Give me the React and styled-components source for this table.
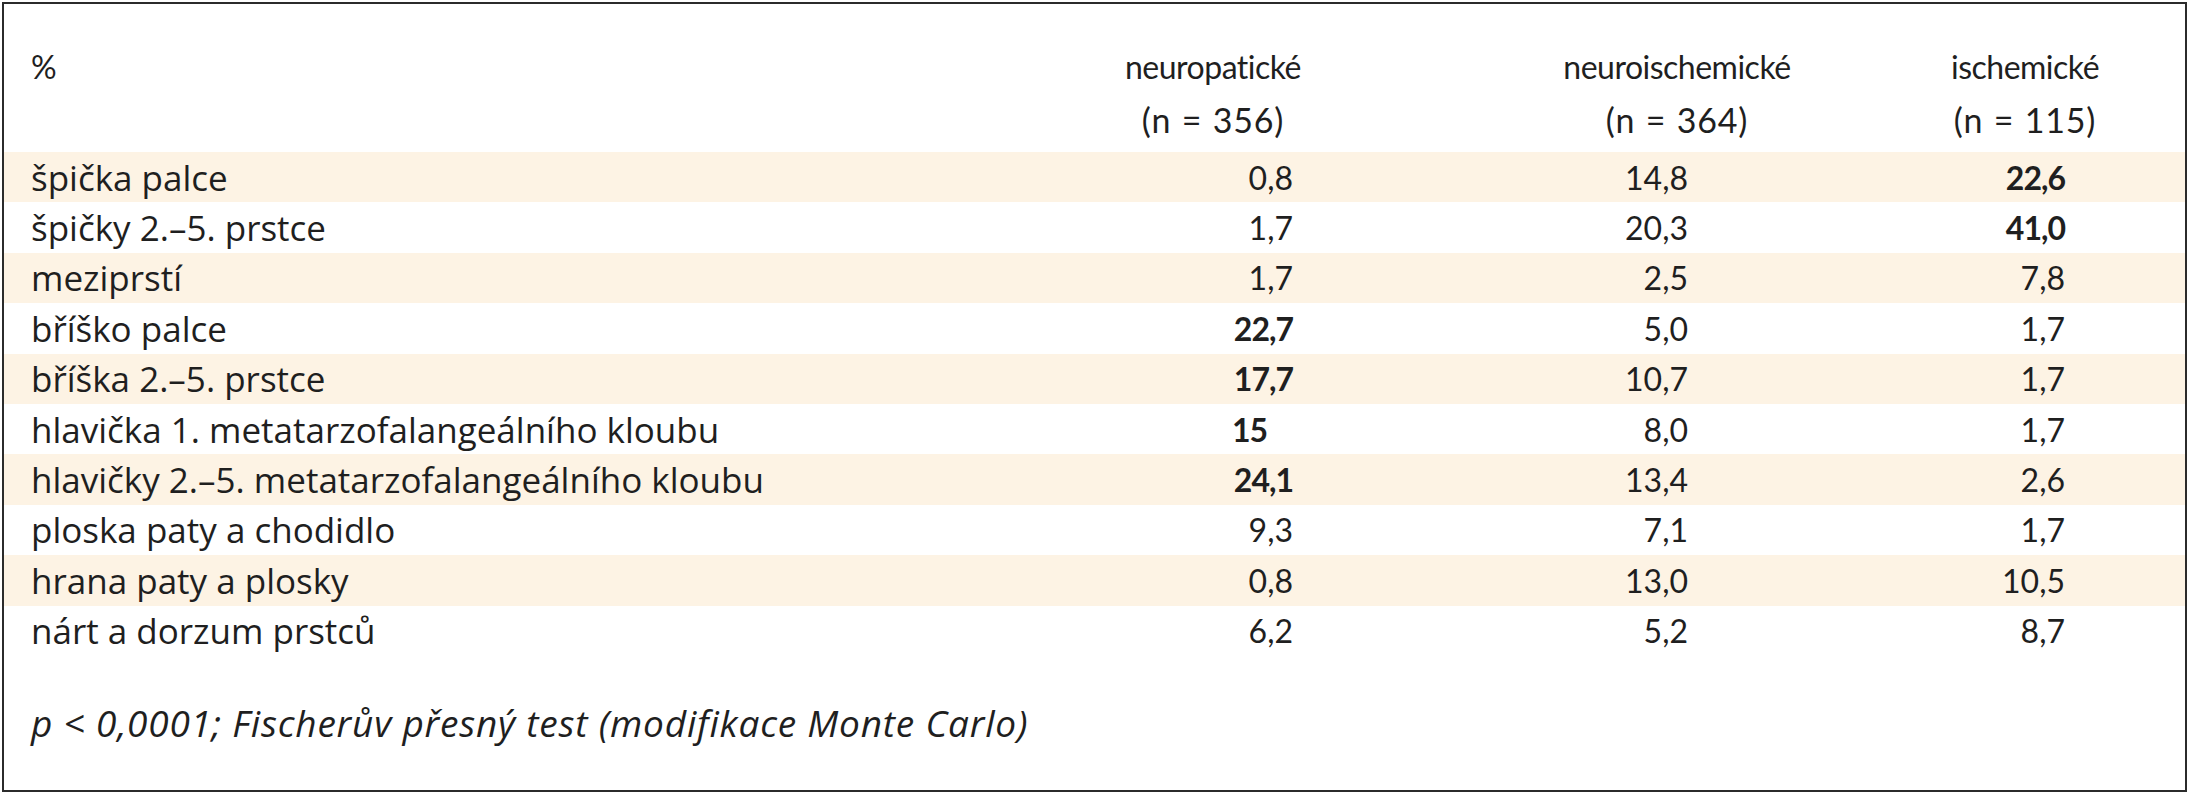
import React from "react";
import styled, { createGlobalStyle } from "styled-components";

const GlobalStyle = createGlobalStyle`
  html, body { margin: 0; padding: 0; background: #ffffff; }
  body { font-family: "Open Sans", Lato, sans-serif; color: #1f1f1f; }
`;

const Frame = styled.div`
  box-sizing: border-box;
  width: 2185px;
  height: 790px;
  margin: 2px 0 0 2px;
  border: 2px solid #2b2b2b;
  display: flex;
  flex-direction: column;
`;

const COLS = "1fr 462px 466px 230px";

const HeaderRow = styled.div`
  display: grid;
  grid-template-columns: ${COLS};
  padding: 36px 45px 0 0;
  height: 148px;
  box-sizing: border-box;
  font-family: Lato, "Open Sans", sans-serif;
  font-size: 32px;
  line-height: 53px;
`;

const Corner = styled.div`
  padding-left: 27px;
`;

const HeadCell = styled.div`
  display: flex;
  flex-direction: column;
  align-items: center;
  white-space: nowrap;
`;

const HeadTitle = styled.span`
  letter-spacing: -0.5px;
`;

const HeadCount = styled.span`
  font-size: 34px;
  letter-spacing: 0.8px;
  word-spacing: 1px;
`;

const Body = styled.div`
  display: flex;
  flex-direction: column;
`;

const Row = styled.div`
  display: grid;
  grid-template-columns: ${COLS};
  padding-right: 45px;
  height: 50.4px;
  align-items: center;
  background: ${(p) => (p.$shaded ? "#fdf3e4" : "transparent")};
`;

const Label = styled.div`
  padding-left: 27px;
  white-space: nowrap;
  font-size: 35px;
`;

const ValueCell = styled.div`
  text-align: right;
  padding-right: ${(p) => p.$pr}px;
  font-family: Lato, "Open Sans", sans-serif;
  font-size: 32px;
`;

const Num = styled.span`
  display: inline-block;
  font-weight: ${(p) => (p.$bold ? 700 : 400)};
  letter-spacing: ${(p) => (p.$bold ? "-1px" : "0")};
  text-align: ${(p) => (p.$short ? "left" : "right")};
  width: ${(p) => (p.$short ? "61px" : "auto")};
`;

const Footnote = styled.p`
  margin: 42px 0 0 0;
  padding-left: 27px;
  font-size: 37px;
  letter-spacing: 0.8px;
  line-height: 50px;
  font-style: italic;
`;

const columns = [
  { title: "neuropatické", n: "(n = 356)", pr: 151 },
  { title: "neuroischemické", n: "(n = 364)", pr: 222 },
  { title: "ischemické", n: "(n = 115)", pr: 75 },
];

const rows = [
  ["špička palce", ["0,8"], ["14,8"], ["22,6", true]],
  ["špičky 2.–5. prstce", ["1,7"], ["20,3"], ["41,0", true]],
  ["meziprstí", ["1,7"], ["2,5"], ["7,8"]],
  ["bříško palce", ["22,7", true], ["5,0"], ["1,7"]],
  ["bříška 2.–5. prstce", ["17,7", true], ["10,7"], ["1,7"]],
  ["hlavička 1. metatarzofalangeálního kloubu", ["15", true, true], ["8,0"], ["1,7"]],
  ["hlavičky 2.–5. metatarzofalangeálního kloubu", ["24,1", true], ["13,4"], ["2,6"]],
  ["ploska paty a chodidlo", ["9,3"], ["7,1"], ["1,7"]],
  ["hrana paty a plosky", ["0,8"], ["13,0"], ["10,5"]],
  ["nárt a dorzum prstců", ["6,2"], ["5,2"], ["8,7"]],
];

export default function App() {
  return (
    <>
      <GlobalStyle />
      <Frame>
        <HeaderRow>
          <Corner>%</Corner>
          {columns.map((c) => (
            <HeadCell key={c.title}>
              <HeadTitle>{c.title}</HeadTitle>
              <HeadCount>{c.n}</HeadCount>
            </HeadCell>
          ))}
        </HeaderRow>
        <Body>
          {rows.map((r, i) => (
            <Row key={r[0]} $shaded={i % 2 === 0}>
              <Label>{r[0]}</Label>
              {r.slice(1).map((v, j) => (
                <ValueCell key={j} $pr={columns[j].pr}>
                  <Num $bold={!!v[1]} $short={!!v[2]}>
                    {v[0]}
                  </Num>
                </ValueCell>
              ))}
            </Row>
          ))}
        </Body>
        <Footnote>p &lt; 0,0001; Fischerův přesný test (modifikace Monte Carlo)</Footnote>
      </Frame>
    </>
  );
}
